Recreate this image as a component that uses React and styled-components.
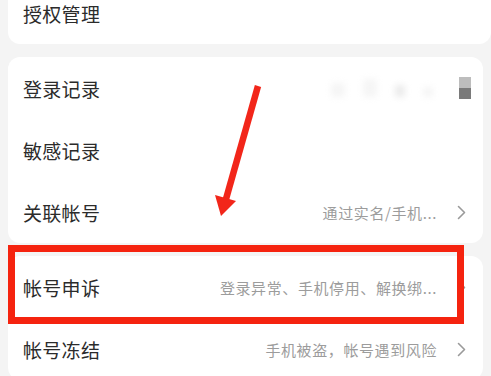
import React from 'react';
import styled, { createGlobalStyle } from 'styled-components';

const GlobalStyle = createGlobalStyle`
  html, body {
    margin: 0;
    padding: 0;
    background: #f4f4f4;
    font-family: "Noto Sans CJK SC", "Noto Sans", sans-serif;
    overflow: hidden;
  }
`;

const items = [
  { group: 'top', rows: [{ label: '授权管理' }] },
  {
    group: 'record',
    rows: [
      { label: '登录记录', masked: true },
      { label: '敏感记录' },
      { label: '关联帐号', hint: '通过实名/手机...', arrow: true },
    ],
  },
  {
    group: 'account',
    rows: [
      { label: '帐号申诉', hint: '登录异常、手机停用、解换绑...', arrow: true, marked: true },
      { label: '帐号冻结', hint: '手机被盗，帐号遇到风险', arrow: true },
    ],
  },
];

const Chevron = () => (
  <svg width="9" height="15" viewBox="0 0 9 15">
    <path d="M1.5 1.5 L7.5 7.5 L1.5 13.5" fill="none" stroke="#9a9a9a" strokeWidth="1.6" strokeLinecap="round" strokeLinejoin="round" />
  </svg>
);

// 登录记录 右侧被打码的部分
const Masked = () => (
  <MaskWrap>
    <Blur>
      <Smudge w={14} h={14} />
      <Smudge w={14} h={18} />
      <Smudge w={10} h={12} dark />
      <Smudge w={10} h={10} />
    </Blur>
    <GrayBlock>
      <span />
      <span />
    </GrayBlock>
  </MaskWrap>
);

const App = () => (
  <Page>
    <GlobalStyle />
    <List>
      {items.map((card) => (
        <Card key={card.group} flush={card.group === 'top'}>
          {card.rows.map((row) => (
            <Row key={row.label}>
              <Label>{row.label}</Label>
              <Right>
                {row.hint && <Hint>{row.hint}</Hint>}
                {row.masked && <Masked />}
                {row.arrow && <Chevron />}
              </Right>
            </Row>
          ))}
        </Card>
      ))}
    </List>
    <Arrow width="65" height="140" viewBox="0 0 65 140">
      <line x1="53" y1="6" x2="21" y2="119" stroke="#f2261a" strokeWidth="6.5" strokeLinecap="butt" />
      <polygon points="16,136 31,121 10,115" fill="#f2261a" />
    </Arrow>
    <Highlight />
  </Page>
);

const Page = styled.div`
  position: relative;
  width: 491px;
  height: 376px;
  overflow: hidden;
`;

const List = styled.div`
  display: flex;
  flex-direction: column;
  gap: 13px;
  margin-top: -18px;
`;

const Card = styled.div`
  background: #fff;
  border-radius: 12px;
  margin: 0 ${(p) => (p.flush ? '0' : '8px')} 0 8px;
`;

const Row = styled.div`
  height: 62px;
  display: flex;
  align-items: center;
  justify-content: space-between;
  padding: 0 17px 0 15px;
`;

const Label = styled.div`
  font-size: 19px;
  color: #2b2b2b;
  letter-spacing: 0.3px;
`;

const Right = styled.div`
  display: flex;
  align-items: center;
  gap: 20px;
`;

const Hint = styled.div`
  font-size: 15px;
  color: #9c9c9c;
  letter-spacing: 0.6px;
`;

const MaskWrap = styled.div`
  display: flex;
  align-items: center;
  gap: 26px;
`;

const Blur = styled.div`
  display: flex;
  align-items: flex-end;
  gap: 18px;
  filter: blur(3px);
  opacity: 0.5;
`;

const Smudge = styled.div`
  width: ${(p) => p.w}px;
  height: ${(p) => p.h}px;
  background: ${(p) => (p.dark ? '#d8d8d8' : '#ececec')};
`;

const GrayBlock = styled.div`
  display: flex;
  flex-direction: column;
  width: 12px;
  margin-right: -5px;
  span {
    height: 11px;
    background: #bdbdbd;
  }
  span + span {
    background: #7a7a7a;
  }
`;

const Arrow = styled.svg`
  position: absolute;
  left: 205px;
  top: 80px;
`;

const Highlight = styled.div`
  position: absolute;
  left: 8px;
  top: 245px;
  width: 456px;
  height: 79px;
  box-sizing: border-box;
  border: 7px solid #f5230f;
`;

export default App;
